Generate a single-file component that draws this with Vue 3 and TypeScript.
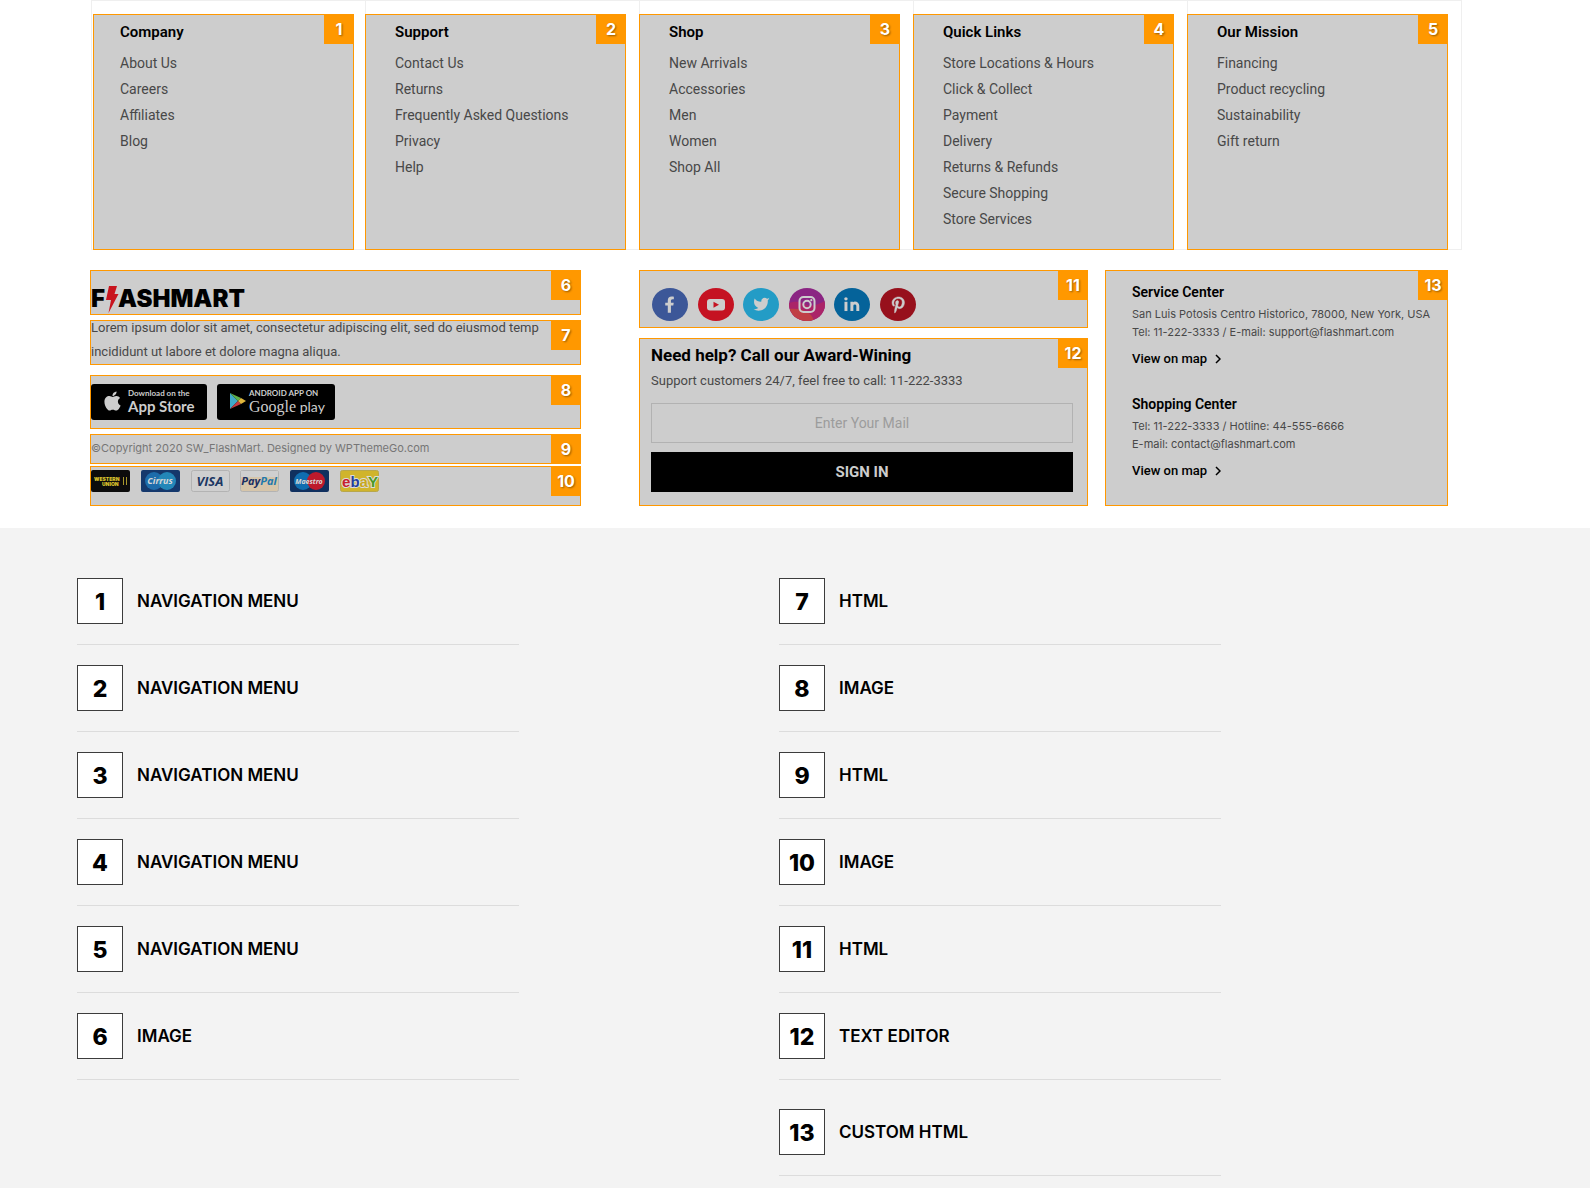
<script setup lang="ts">
interface MenuColumn {
  id: number
  title: string
  links: string[]
}

interface Center {
  title: string
  lines: string[]
}

interface LegendItem {
  id: number
  label: string
}

const menus: MenuColumn[] = [
  { id: 1, title: 'Company', links: ['About Us', 'Careers', 'Affiliates', 'Blog'] },
  {
    id: 2,
    title: 'Support',
    links: ['Contact Us', 'Returns', 'Frequently Asked Questions', 'Privacy', 'Help'],
  },
  { id: 3, title: 'Shop', links: ['New Arrivals', 'Accessories', 'Men', 'Women', 'Shop All'] },
  {
    id: 4,
    title: 'Quick Links',
    links: [
      'Store Locations & Hours',
      'Click & Collect',
      'Payment',
      'Delivery',
      'Returns & Refunds',
      'Secure Shopping',
      'Store Services',
    ],
  },
  {
    id: 5,
    title: 'Our Mission',
    links: ['Financing', 'Product recycling', 'Sustainability', 'Gift return'],
  },
]

const centers: Center[] = [
  {
    title: 'Service Center',
    lines: [
      'San Luis Potosis Centro Historico, 78000, New York, USA',
      'Tel: 11-222-3333 / E-mail: support@flashmart.com',
    ],
  },
  {
    title: 'Shopping Center',
    lines: ['Tel: 11-222-3333 / Hotline: 44-555-6666', 'E-mail: contact@flashmart.com'],
  },
]

const legend: LegendItem[][] = [
  [
    { id: 1, label: 'NAVIGATION MENU' },
    { id: 2, label: 'NAVIGATION MENU' },
    { id: 3, label: 'NAVIGATION MENU' },
    { id: 4, label: 'NAVIGATION MENU' },
    { id: 5, label: 'NAVIGATION MENU' },
    { id: 6, label: 'IMAGE' },
  ],
  [
    { id: 7, label: 'HTML' },
    { id: 8, label: 'IMAGE' },
    { id: 9, label: 'HTML' },
    { id: 10, label: 'IMAGE' },
    { id: 11, label: 'HTML' },
    { id: 12, label: 'TEXT EDITOR' },
    { id: 13, label: 'CUSTOM HTML' },
  ],
]
</script>

<template>
  <div class="page">
    <footer class="footer">
      <div class="menus">
        <div v-for="menu in menus" :key="menu.id" class="cell">
          <nav class="block menu" :aria-label="menu.title">
            <span class="tag">{{ menu.id }}</span>
            <h3>{{ menu.title }}</h3>
            <ul>
              <li v-for="link in menu.links" :key="link"><a href="#">{{ link }}</a></li>
            </ul>
          </nav>
        </div>
      </div>

      <div class="lower">
        <div class="col col-brand">
          <div class="block logo-block">
            <span class="tag">6</span>
            <a href="#" class="logo" aria-label="Flashmart">
              <span>F</span>
              <svg class="bolt" width="13" height="27" viewBox="0 0 13 27" aria-hidden="true">
                <path d="M3 0h8L8.500 8H12.500L2.500 27L5 14H0z" fill="#c8141e" />
              </svg>
              <span>ASHMART</span>
            </a>
          </div>

          <div class="block about">
            <span class="tag">7</span>
            <p>
              Lorem ipsum dolor sit amet, consectetur adipiscing elit, sed do eiusmod temp<br />
              incididunt ut labore et dolore magna aliqua.
            </p>
          </div>

          <div class="block apps">
            <span class="tag">8</span>
            <a href="#" class="store">
              <svg width="19" height="22" viewBox="0 0 384 512" aria-hidden="true">
                <path
                  fill="#cdcdcd"
                  d="M318.7 268.7c-.2-36.7 16.4-64.4 50-84.8-18.8-26.9-47.2-41.7-84.7-44.6-35.500-2.8-74.3 20.7-88.500 20.7-15 0-49.4-19.7-76.4-19.7C63.3 141.2 4 184.8 4 273.500q0 39.3 14.4 81.2c12.8 36.7 59 126.7 107.2 125.2 25.2-.6 43-17.9 75.8-17.9 31.8 0 48.3 17.9 76.4 17.9 48.6-.7 90.4-82.500 102.6-119.3-65.2-30.7-61.7-90-61.7-91.9zm-56.6-164.2c27.3-32.4 24.8-61.9 24-72.500-24.1 1.4-52 16.4-67.9 34.9-17.500 19.8-27.8 44.3-25.6 71.9 26.1 2 49.9-11.4 69.500-34.3z"
                />
              </svg>
              <span class="store-text">
                <small>Download on the</small>
                <strong>App Store</strong>
              </span>
            </a>
            <a href="#" class="store store-google">
              <svg width="17" height="16" viewBox="0 0 17 16" aria-hidden="true">
                <path d="M1 0L9 8L1 16z" fill="#3fa9c9" />
                <path d="M1 0L12 5L9 8z" fill="#5fb04a" />
                <path d="M1 16L12 11L9 8z" fill="#c63a3f" />
                <path d="M12 5L17 8L12 11L9 8z" fill="#e0b63c" />
              </svg>
              <span class="store-text">
                <small>ANDROID APP ON</small>
                <strong><span class="google">Google</span> play</strong>
              </span>
            </a>
          </div>

          <div class="block copyright">
            <span class="tag">9</span>
            <p>©Copyright 2020 SW_FlashMart. Designed by WPThemeGo.com</p>
          </div>

          <div class="block payments">
            <span class="tag">10</span>
            <div class="cards">
              <svg viewBox="0 0 39 22" role="img" aria-label="Western Union">
                <rect width="39" height="22" rx="2" fill="#0c0c0c" />
                <text x="3" y="11" class="wu">WESTERN</text>
                <text x="11" y="16" class="wu">UNION</text>
                <path d="M32.500 7v8M35.500 7v8" stroke="#a8982c" />
              </svg>
              <svg viewBox="0 0 39 22" role="img" aria-label="Cirrus">
                <rect width="39" height="22" rx="2" fill="#15386c" />
                <circle cx="13" cy="11" r="9" fill="#1d6cab" />
                <circle cx="26" cy="11" r="9" fill="#2387b8" />
                <text x="19" y="14" text-anchor="middle" class="brand-mark">Cirrus</text>
              </svg>
              <svg viewBox="0 0 39 22" role="img" aria-label="Visa">
                <rect x=".5" y=".5" width="38" height="21" rx="2" fill="#cfcfcf" stroke="#b3b3b3" />
                <text x="19" y="16" text-anchor="middle" class="visa">VISA</text>
              </svg>
              <svg viewBox="0 0 39 22" role="img" aria-label="PayPal">
                <rect x=".5" y=".5" width="38" height="21" rx="2" fill="#d6c5aa" stroke="#b3b3b3" />
                <rect x="1" y="1" width="37" height="6" fill="#cfcfcf" />
                <text x="19" y="15" text-anchor="middle" class="paypal">
                  <tspan fill="#1a2f62">Pay</tspan><tspan fill="#1f78ad">Pal</tspan>
                </text>
              </svg>
              <svg viewBox="0 0 39 22" role="img" aria-label="Maestro">
                <rect width="39" height="22" rx="2" fill="#10305f" />
                <circle cx="13" cy="11" r="9" fill="#0f6db0" />
                <circle cx="26" cy="11" r="9" fill="#bd1a2c" />
                <text x="19" y="14" text-anchor="middle" class="brand-mark maestro">Maestro</text>
              </svg>
              <svg viewBox="0 0 39 22" role="img" aria-label="eBay">
                <rect x=".5" y=".5" width="38" height="21" rx="2" fill="#d0b42c" stroke="#b8a74c" />
                <text x="20" y="17" text-anchor="middle" class="ebay">
                  <tspan fill="#c8202c">e</tspan><tspan fill="#23409a">b</tspan><tspan fill="#c9a81c">a</tspan><tspan fill="#4c9a24">Y</tspan>
                </text>
              </svg>
            </div>
          </div>
        </div>

        <div class="col col-help">
          <div class="block social">
            <span class="tag">11</span>
            <div class="social-list">
              <a href="#" aria-label="Facebook">
                <svg viewBox="0 0 36 33">
                  <ellipse cx="18" cy="16.500" rx="18" ry="16.500" fill="#3c5798" />
                  <path
                    transform="translate(12.500 8.500) scale(.0315)"
                    fill="#cdcdcd"
                    d="M279.14 288l14.22-92.66h-88.91v-60.13c0-25.35 12.42-50.06 52.24-50.06h40.42V6.26S260.43 0 225.36 0c-73.22 0-121.08 44.38-121.08 124.72v70.62H22.89V288h81.39v224h100.17V288z"
                  />
                </svg>
              </a>
              <a href="#" aria-label="YouTube">
                <svg viewBox="0 0 36 33">
                  <ellipse cx="18" cy="16.500" rx="18" ry="16.500" fill="#c51222" />
                  <rect x="9" y="11" width="18" height="11.500" rx="3" fill="#cdcdcd" />
                  <path d="M15.500 13.700l5.500 3-5.500 3z" fill="#c51222" />
                </svg>
              </a>
              <a href="#" aria-label="Twitter">
                <svg viewBox="0 0 36 33">
                  <ellipse cx="18" cy="16.500" rx="18" ry="16.500" fill="#239cc6" />
                  <path
                    transform="translate(9.500 7.500) scale(.73)"
                    fill="#cdcdcd"
                    d="M23 3a10.9 10.9 0 0 1-3.14 1.53 4.48 4.48 0 0 0-7.86 3v1A10.66 10.66 0 0 1 3 4s-4 9 5 13a11.64 11.64 0 0 1-7 2c9 5 20 0 20-11.500a4.500 4.500 0 0 0-.08-.83A7.72 7.72 0 0 0 23 3z"
                  />
                </svg>
              </a>
              <a href="#" aria-label="Instagram">
                <svg viewBox="0 0 36 33">
                  <defs>
                    <clipPath id="insta-disc">
                      <ellipse cx="18" cy="16.500" rx="18" ry="16.500" />
                    </clipPath>
                  </defs>
                  <g clip-path="url(#insta-disc)">
                    <rect width="36" height="33" fill="#8b2583" />
                    <path d="M0 15c8-3 14 0 18 2s12-1 18-4v20H0z" fill="#ab2468" />
                    <path d="M0 21c10-1 22 1 25 12H0z" fill="#c03f45" />
                  </g>
                  <g fill="none" stroke="#cdcdcd" stroke-width="2">
                    <rect x="10.500" y="9" width="15" height="15" rx="4" />
                    <circle cx="18" cy="16.500" r="3.700" />
                  </g>
                  <circle cx="22.300" cy="12.200" r="1.100" fill="#cdcdcd" />
                </svg>
              </a>
              <a href="#" aria-label="LinkedIn">
                <svg viewBox="0 0 36 33">
                  <ellipse cx="18" cy="16.500" rx="18" ry="16.500" fill="#05639a" />
                  <g transform="translate(9 7.500) scale(.74)" fill="#cdcdcd">
                    <path d="M16 8a6 6 0 0 1 6 6v7h-4v-7a2 2 0 0 0-4 0v7h-4V8.500h4V9a5 5 0 0 1 2-1z" />
                    <rect x="2" y="8.500" width="4" height="12.500" />
                    <circle cx="4" cy="4.500" r="2.300" />
                  </g>
                </svg>
              </a>
              <a href="#" aria-label="Pinterest">
                <svg viewBox="0 0 36 33">
                  <ellipse cx="18" cy="16.500" rx="18" ry="16.500" fill="#97101c" />
                  <path
                    transform="translate(12 8.700) scale(.0325)"
                    fill="#cdcdcd"
                    stroke="#cdcdcd"
                    stroke-width="14"
                    d="M204 6.500C101.4 6.500 0 74.9 0 185.6 0 256 39.6 296 63.6 296c9.9 0 15.6-27.6 15.6-35.4 0-9.3-23.7-29.1-23.7-67.8 0-80.4 61.2-137.4 140.4-137.4 68.1 0 118.500 38.7 118.500 109.8 0 53.1-21.3 152.7-90.3 152.7-24.9 0-46.2-18-46.2-43.8 0-37.8 26.4-74.4 26.4-113.4 0-66.2-93.9-54.2-93.9 25.8 0 16.8 2.1 35.4 9.6 50.7-13.8 59.4-42 147.9-42 209.1 0 18.9 2.7 37.500 4.500 56.4 3.4 3.8 1.7 3.4 6.9 1.500 50.4-69 48.6-82.500 71.4-172.8 12.3 23.4 44.1 36 69.3 36 106.2 0 153.9-103.500 153.9-196.8C384 71.3 298.2 6.500 204 6.500z"
                  />
                </svg>
              </a>
            </div>
          </div>

          <div class="block help">
            <span class="tag">12</span>
            <h2>Need help? Call our Award-Wining</h2>
            <p>Support customers 24/7, feel free to call: 11-222-3333</p>
            <form @submit.prevent>
              <input type="email" placeholder="Enter Your Mail" aria-label="Enter Your Mail" />
              <button type="submit">SIGN IN</button>
            </form>
          </div>
        </div>

        <div class="col col-centers">
          <div class="block centers">
            <span class="tag">13</span>
            <section v-for="center in centers" :key="center.title" class="center">
              <h4>{{ center.title }}</h4>
              <p v-for="line in center.lines" :key="line">{{ line }}</p>
              <a href="#">
                View on map
                <svg width="6" height="10" viewBox="0 0 6 10" aria-hidden="true">
                  <path d="M1 1l4 4-4 4" fill="none" stroke="#000" stroke-width="1.500" />
                </svg>
              </a>
            </section>
          </div>
        </div>
      </div>
    </footer>

    <main class="legend">
      <ul v-for="(column, index) in legend" :key="index">
        <li v-for="item in column" :key="item.id" :class="{ spaced: item.id === 13 }">
          <span class="number">{{ item.id }}</span>
          <span class="label">{{ item.label }}</span>
        </li>
      </ul>
    </main>
  </div>
</template>

<style>
body {
  margin: 0;
}
</style>

<style scoped>
.page {
  display: flex;
  flex-direction: column;
  min-height: 100vh;
  background: #f3f3f3;
  font-family: Roboto, 'Liberation Sans', sans-serif;
  font-size: 14px;
  color: #484848;
}

h2,
h3,
h4,
p,
ul {
  margin: 0;
  padding: 0;
}

h2,
h3,
h4 {
  color: #000;
  font-weight: 600;
  line-height: 20px;
}

ul {
  list-style: none;
}

a {
  color: inherit;
  text-decoration: none;
}

.footer {
  padding-bottom: 22px;
  background: #fff;
}

.block {
  position: relative;
  box-sizing: border-box;
  border: 1px solid #ff9800;
  background: #cdcdcd;
}

.tag {
  position: absolute;
  top: -1px;
  right: -1px;
  width: 30px;
  height: 30px;
  background: #ff9800;
  color: #fff;
  font: 700 16px/30px Inter, sans-serif;
  text-align: center;
  text-shadow: 1px 1px 2px rgba(0, 0, 0, 0.4);
}

/* Link columns */
.menus {
  display: grid;
  grid-template-columns: repeat(5, 1fr);
  margin: 0 128px 0 91px;
  border: 1px solid #efefef;
  border-left: 0;
}

.cell {
  display: flex;
  padding: 13px 13px 0 0;
  border-left: 1px solid #efefef;
}

.menu {
  flex: 1;
  min-height: 236px;
  margin: 0 0 -1px -1px;
  padding: 7px 28px 14px 29px;
}

.cell:first-child {
  padding: 13px 11px 0 2px;
}

.cell:first-child .menu {
  padding-left: 26px;
}

.menu h3 {
  margin-bottom: 8px;
  font-size: 15px;
}

.menu li {
  line-height: 26px;
}

/* Lower row */
.lower {
  display: flex;
  margin: 20px 142px 0 90px;
}

.col {
  display: flex;
  flex-direction: column;
  min-width: 0;
}

.col-brand {
  flex: 491 1 0;
  margin-right: 58px;
}

.col-help {
  flex: 449 1 0;
  gap: 10px;
  margin-right: 17px;
}

.col-centers {
  flex: 343 1 0;
}

.logo-block {
  height: 45px;
  margin-bottom: 5px;
}

.logo {
  display: flex;
  align-items: flex-start;
  padding-top: 15px;
  color: #000;
  font: 900 24px/26px Inter, sans-serif;
}

.bolt {
  margin: 0 -1px 0 1px;
}

.about {
  height: 45px;
  margin-bottom: 10px;
}

.about p {
  margin-top: -5px;
  font-size: 13px;
  line-height: 24px;
  white-space: nowrap;
}

.apps {
  display: flex;
  align-items: flex-start;
  gap: 10px;
  height: 54px;
  margin-bottom: 5px;
  padding-top: 8px;
}

.store {
  display: flex;
  align-items: center;
  box-sizing: border-box;
  width: 116px;
  height: 36px;
  gap: 6px;
  padding: 0 0 2px 12px;
  border-radius: 3px;
  background: #000;
  color: #cdcdcd;
}

.store-google {
  width: 118px;
  gap: 3px;
}

.store-text {
  display: flex;
  flex-direction: column;
  white-space: nowrap;
}

.store-text small {
  font: 700 8px/10px Lato, sans-serif;
}

.store-text strong {
  font: 700 15px/17px Lato, sans-serif;
}

.store-google strong {
  font-size: 14px;
  font-weight: 400;
}

.google {
  font-family: 'Liberation Serif', serif;
  font-size: 16px;
}

.copyright {
  height: 30px;
  margin-bottom: 2px;
  color: #767676;
  font: 11px/26px Inter, sans-serif;
}

.payments {
  height: 40px;
}

.cards {
  display: flex;
  justify-content: space-between;
  width: 288px;
  padding-top: 3px;
}

.cards svg {
  width: 39px;
  height: 22px;
}

.wu {
  fill: #d8c22c;
  font: 900 5px Inter, sans-serif;
}

.brand-mark {
  fill: #d8d8d8;
  font: italic 700 9px 'Open Sans', sans-serif;
}

.maestro {
  font-size: 7px;
}

.visa {
  fill: #1c3763;
  font: italic 700 13px 'Open Sans', sans-serif;
}

.paypal {
  font: italic 700 11px 'Open Sans', sans-serif;
}

.ebay {
  font: 700 15px 'Liberation Sans', sans-serif;
  stroke: #dcdcdc;
  stroke-width: 2px;
  paint-order: stroke;
}

.social {
  height: 58px;
}

.social-list {
  display: flex;
  justify-content: space-between;
  width: 264px;
  padding: 17px 0 0 12px;
}

.social-list a,
.social-list svg {
  display: block;
  width: 36px;
  height: 33px;
}

.help {
  flex: 1;
  padding: 6px 14px 12px 11px;
}

.help h2 {
  font-size: 17px;
  font-weight: 700;
}

.help p {
  margin: 6px 0 12px;
  font-size: 13px;
  line-height: 20px;
}

.help form {
  display: flex;
  flex-direction: column;
  gap: 9px;
}

.help input,
.help button {
  box-sizing: border-box;
  width: 100%;
  height: 40px;
  margin: 0;
  border-radius: 0;
  font-family: inherit;
  text-align: center;
}

.help input {
  border: 1px solid #b2b2b2;
  background: transparent;
  font-size: 14px;
}

.help input::placeholder {
  color: #9c9c9c;
}

.help button {
  border: 0;
  background: #000;
  color: #cdcdcd;
  font-size: 15px;
  font-weight: 700;
}

.centers {
  flex: 1;
  display: flex;
  flex-direction: column;
  gap: 25px;
  padding: 11px 0 0 26px;
}

.center h4 {
  margin-bottom: 3px;
  font-size: 14px;
}

.center p {
  font: 11px/18px Inter, sans-serif;
  white-space: nowrap;
}

.center a {
  display: flex;
  align-items: center;
  gap: 8px;
  margin-top: 8px;
  color: #000;
  font-size: 13px;
  font-weight: 500;
  line-height: 20px;
}

/* Numbered key */
.legend {
  display: grid;
  grid-template-columns: 1fr 1fr;
  padding: 30px 109px 12px 77px;
}

.legend ul {
  margin-right: 260px;
}

.legend li {
  display: flex;
  align-items: center;
  gap: 14px;
  padding: 20px 0;
  border-bottom: 1px solid #dcdcdc;
}

.legend .spaced {
  padding-top: 29px;
}

.number {
  box-sizing: border-box;
  width: 46px;
  height: 46px;
  border: 1px solid #3c3c3c;
  background: #fff;
  color: #000;
  font: 800 23px/46px Inter, sans-serif;
  text-align: center;
}

.label {
  color: #000;
  font: 600 17px/20px Inter, sans-serif;
}
</style>
